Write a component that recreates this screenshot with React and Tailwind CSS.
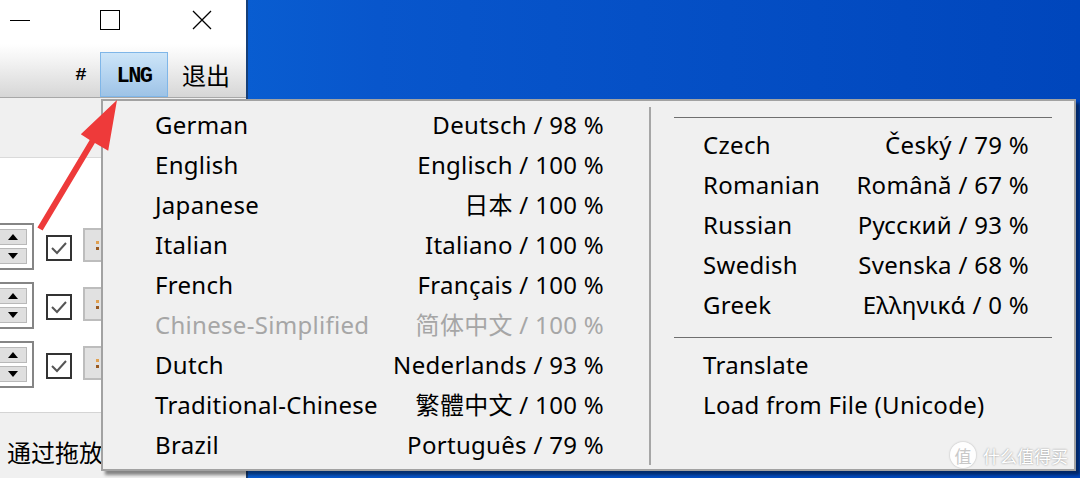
import React from "react";

const leftItems = [
  ["German", "Deutsch / 98 %"],
  ["English", "Englisch / 100 %"],
  ["Japanese", "日本 / 100 %"],
  ["Italian", "Italiano / 100 %"],
  ["French", "Français / 100 %"],
  ["Chinese-Simplified", "简体中文 / 100 %", true],
  ["Dutch", "Nederlands / 93 %"],
  ["Traditional-Chinese", "繁體中文 / 100 %"],
  ["Brazil", "Português / 79 %"],
];

const rightItems = [
  ["Czech", "Český / 79 %"],
  ["Romanian", "Română / 67 %"],
  ["Russian", "Русский / 93 %"],
  ["Swedish", "Svenska / 68 %"],
  ["Greek", "Ελληνικά / 0 %"],
];

const menuFont = {
  fontFamily: '"Noto Sans", "Noto Sans CJK SC", sans-serif',
};

function MenuRow({ name, native, disabled }) {
  return (
    <div
      className={`flex h-[40px] items-center justify-between text-[24px] leading-none tracking-[0.3px] ${
        disabled ? "text-[#a6a6a6]" : "text-black"
      }`}
    >
      <span>{name}</span>
      <span>{native}</span>
    </div>
  );
}

function SpinRow() {
  return (
    <div className="flex h-[47px] items-start">
      {/* spin control, its left part runs off the window edge */}
      <div className="flex h-[47px] w-[34px] flex-col gap-[3px] border-2 border-l-0 border-[#858585] bg-white py-[4px] pr-[5px]">
        <div className="flex h-[17px] w-full items-center justify-center border border-l-0 border-[#b9b9b9] bg-[#dfdfdf]">
          <svg width="10" height="6" viewBox="0 0 10 6">
            <polygon points="5,0 10,6 0,6" fill="#000" />
          </svg>
        </div>
        <div className="flex h-[17px] w-full items-center justify-center border border-l-0 border-[#b9b9b9] bg-[#dfdfdf]">
          <svg width="10" height="6" viewBox="0 0 10 6">
            <polygon points="0,0 10,0 5,6" fill="#000" />
          </svg>
        </div>
      </div>
      <div className="ml-[12px] mt-[12px] flex h-[26px] w-[26px] items-center justify-center border-2 border-[#333] bg-white">
        <svg width="18" height="14" viewBox="0 0 18 14">
          <polyline points="2,7 7,12 16,2" fill="none" stroke="#555" strokeWidth="2" />
        </svg>
      </div>
      <div className="ml-[11px] mt-[5px] flex h-[34px] w-[30px] items-center justify-end border-2 border-[#bdbdbd] bg-[#e1e1e1] pr-[12px]">
        <div className="flex flex-col gap-[3px]">
          <div className="h-[3px] w-[3px] bg-[#e0a050]" />
          <div className="h-[3px] w-[3px] bg-[#9a5a20]" />
        </div>
      </div>
    </div>
  );
}

export default function App() {
  return (
    <div className="relative h-[478px] w-[1080px] overflow-hidden bg-[linear-gradient(90deg,#0a6ada_0%,#0856cc_35%,#0046bc_100%)]">
      {/* application window */}
      <div className="absolute left-0 top-0 flex h-[478px] w-[248px] flex-col border-r-2 border-[#163f78] bg-[#f0f0f0]">
        {/* caption buttons */}
        <div className="flex h-[44px] shrink-0 items-start bg-white pl-[10px] pt-[10px]">
          <div className="mt-[10px] h-[1px] w-[20px] bg-black" />
          <div className="ml-[70px] h-[20px] w-[20px] border-[1.5px] border-black" />
          <svg className="ml-[72px]" width="20" height="20" viewBox="0 0 20 20">
            <path d="M1 1 L19 19 M19 1 L1 19" stroke="#000" strokeWidth="1.3" />
          </svg>
        </div>
        {/* toolbar */}
        <div className="flex h-[54px] shrink-0 items-stretch border-b border-[#a8a8a8] bg-[linear-gradient(180deg,#ffffff_0%,#f4f4f4_30%,#d6d6d6_100%)] pt-[8px]">
          <div
            className="ml-[62px] flex w-[38px] items-center justify-center pt-[2px] text-[19px] font-bold text-black"
            style={{ fontFamily: '"Liberation Mono", monospace' }}
          >
            #
          </div>
          <div
            className="flex w-[68px] items-center justify-center border border-[#7fb6e8] bg-[linear-gradient(180deg,#cde5f8_0%,#b5d4f0_50%,#9ec3e6_100%)] pt-[3px] text-[22px] font-bold tracking-[-1.5px] text-black"
            style={{ fontFamily: '"Liberation Mono", monospace' }}
          >
            LNG
          </div>
          <div
            className="ml-[14px] flex items-center text-[24px] text-black"
            style={{ fontFamily: '"Noto Sans CJK SC", sans-serif' }}
          >
            退出
          </div>
        </div>
        {/* upper strip */}
        <div className="h-[60px] shrink-0 border-b border-[#dadada] bg-[#f0f0f0]" />
        {/* list area */}
        <div className="flex h-[255px] shrink-0 flex-col gap-[12px] border-b border-[#d4d4d4] bg-white pt-[65px]">
          <SpinRow />
          <SpinRow />
          <SpinRow />
        </div>
        {/* status text, partly under the popup */}
        <div
          className="w-[110px] whitespace-nowrap pl-[7px] pt-[23px] text-[24px] leading-[32px] text-black"
          style={{ fontFamily: '"Noto Sans CJK SC", sans-serif' }}
        >
          通过拖放
        </div>
      </div>

      {/* language popup menu */}
      <div
        className="absolute left-[101px] top-[99px] flex h-[372px] w-[975px] border-2 border-[#a2a2a2] bg-[#f0f0f0] shadow-[4px_4px_3px_rgba(0,0,0,0.45)]"
        style={menuFont}
      >
        <div className="w-[546px] shrink-0 pl-[52px] pr-[45px] pt-[4px]">
          {leftItems.map(([name, native, disabled]) => (
            <MenuRow key={name} name={name} native={native} disabled={disabled} />
          ))}
        </div>
        <div className="mb-[4px] mt-[6px] w-[2px] shrink-0 bg-[#a6a6a6]" />
        <div className="flex flex-col pl-[23px] pt-[16px]">
          <div className="h-[1px] w-[378px] bg-[#6f6f6f]" />
          <div className="mt-[7px] w-[355px] pl-[29px]">
            {rightItems.map(([name, native]) => (
              <MenuRow key={name} name={name} native={native} />
            ))}
          </div>
          <div className="mt-[12px] h-[1px] w-[378px] bg-[#6f6f6f]" />
          <div className="mt-[7px] pl-[29px] text-[24px] leading-none tracking-[0.3px] text-black">
            <div className="flex h-[40px] items-center">Translate</div>
            <div className="flex h-[40px] items-center">Load from File (Unicode)</div>
          </div>
        </div>
      </div>

      {/* pointer arrow */}
      <svg
        className="pointer-events-none absolute left-0 top-0"
        width="1080"
        height="478"
        viewBox="0 0 1080 478"
      >
        <polygon
          points="37.4,227.5 89.7,139.9 80.8,134.3 117,100 108.2,150.7 94.9,142.9 42.6,230.5"
          fill="#ee3a3a"
        />
      </svg>

      {/* site watermark */}
      <div
        className="pointer-events-none absolute left-[950px] top-[442px] flex items-center gap-[7px] text-white"
        style={{ fontFamily: '"Noto Sans CJK SC", sans-serif' }}
      >
        <div className="flex h-[26px] w-[26px] items-center justify-center rounded-full bg-white/90 text-[17px] leading-none text-[#c8c8c8] shadow-[0_0_2px_rgba(0,0,0,0.3)]">
          值
        </div>
        <span className="text-[17px] leading-none [text-shadow:0_0_2px_rgba(0,0,0,0.45)]">
          什么值得买
        </span>
      </div>
    </div>
  );
}
